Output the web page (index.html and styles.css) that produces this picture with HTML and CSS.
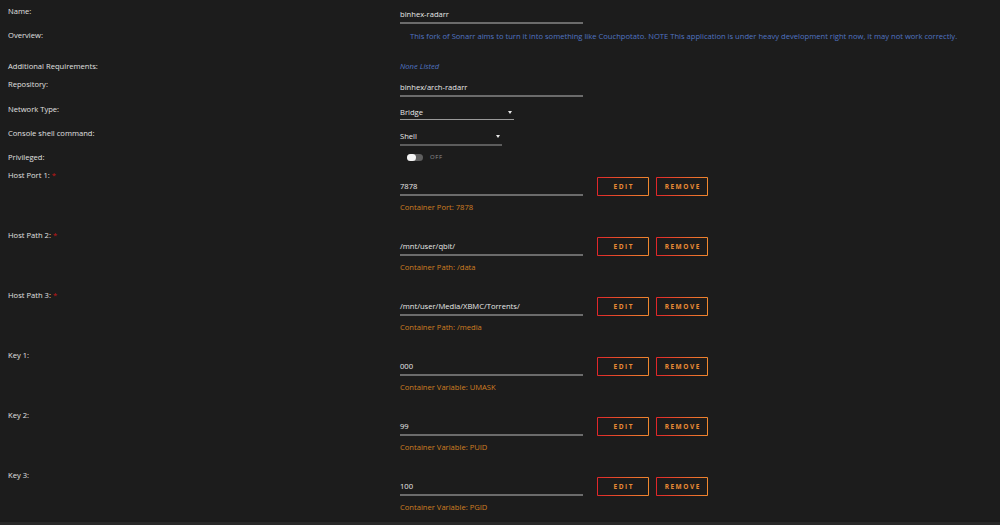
FILE: index.html
```html
<!DOCTYPE html>
<html>
<head>
<meta charset="utf-8">
<link rel="stylesheet" href="styles.css">
</head>
<body>
<main class="panel">
  <div class="row r-name">
    <div class="label">Name:</div>
    <div class="value v3"><div class="input w-full">binhex-radarr</div></div>
  </div>
  <div class="row r-overview">
    <div class="label">Overview:</div>
    <div class="value v1"><p class="overview">This fork of Sonarr aims to turn it into something like Couchpotato. NOTE This application is under heavy development right now, it may not work correctly.</p></div>
  </div>
  <div class="row r-req">
    <div class="label">Additional Requirements:</div>
    <div class="value"><span class="none">None Listed</span></div>
  </div>
  <div class="row r-repo">
    <div class="label">Repository:</div>
    <div class="value v3"><div class="input w-full">binhex/arch-radarr</div></div>
  </div>
  <div class="row r-net">
    <div class="label">Network Type:</div>
    <div class="value v3"><div class="select sel-bridge">Bridge<span class="caret"></span></div></div>
  </div>
  <div class="row r-shell">
    <div class="label">Console shell command:</div>
    <div class="value v3"><div class="select sel-shell">Shell<span class="caret"></span></div></div>
  </div>
  <div class="row r-priv">
    <div class="label">Privileged:</div>
    <div class="value"><div class="switch"><span class="track"><span class="knob"></span></span><span class="off">OFF</span></div></div>
  </div>

  <div class="row r-cfg">
    <div class="label">Host Port 1: <span class="req">*</span></div>
    <div class="value v8">
      <div class="cfg-line"><div class="input w-full">7878</div><button class="btn">EDIT</button><button class="btn">REMOVE</button></div>
      <div class="hint">Container Port: 7878</div>
    </div>
  </div>
  <div class="row r-cfg">
    <div class="label">Host Path 2: <span class="req">*</span></div>
    <div class="value v8">
      <div class="cfg-line"><div class="input w-full">/mnt/user/qbit/</div><button class="btn">EDIT</button><button class="btn">REMOVE</button></div>
      <div class="hint">Container Path: /data</div>
    </div>
  </div>
  <div class="row r-cfg">
    <div class="label">Host Path 3: <span class="req">*</span></div>
    <div class="value v8">
      <div class="cfg-line"><div class="input w-full">/mnt/user/Media/XBMC/Torrents/</div><button class="btn">EDIT</button><button class="btn">REMOVE</button></div>
      <div class="hint">Container Path: /media</div>
    </div>
  </div>
  <div class="row r-cfg">
    <div class="label">Key 1:</div>
    <div class="value v8">
      <div class="cfg-line"><div class="input w-full">000</div><button class="btn">EDIT</button><button class="btn">REMOVE</button></div>
      <div class="hint">Container Variable: UMASK</div>
    </div>
  </div>
  <div class="row r-cfg">
    <div class="label">Key 2:</div>
    <div class="value v8">
      <div class="cfg-line"><div class="input w-full">99</div><button class="btn">EDIT</button><button class="btn">REMOVE</button></div>
      <div class="hint">Container Variable: PUID</div>
    </div>
  </div>
  <div class="row r-cfg r-last">
    <div class="label">Key 3:</div>
    <div class="value v8">
      <div class="cfg-line"><div class="input w-full">100</div><button class="btn">EDIT</button><button class="btn">REMOVE</button></div>
      <div class="hint">Container Variable: PGID</div>
    </div>
  </div>
</main>
</body>
</html>
```

FILE: styles.css
```css
* { box-sizing: border-box; }
html, body { margin: 0; padding: 0; }
body {
  background: #282828;
  font-family: "Open Sans", "DejaVu Sans", sans-serif;
  font-size: 7.6px;
  color: #dcdcdc;
  height: 525px;
  overflow: hidden;
}
.panel {
  background: #1c1c1c;
  padding: 5px 0 0 8px;
}
.row {
  display: grid;
  grid-template-columns: 392px 1fr;
  align-items: start;
}
.label {
  line-height: 12px;
  color: #e0e0e0;
}
.req { color: #c41616; }
.value { line-height: 12px; }
.v1 { margin-top: 1px; }
.v3 { margin-top: 3px; }
.v8 { margin-top: 8px; }

.r-name { height: 24px; }
.r-overview { height: 31px; }
.r-req { height: 18px; }
.r-repo { height: 25px; }
.r-net { height: 24px; }
.r-shell { height: 24px; }
.r-priv { height: 18px; }
.r-cfg { height: 60px; }
.r-last { height: 53px; }

.input {
  width: 183px;
  padding: 0 0 2px 0;
  border-bottom: 2px solid #6b6b6b;
  color: #e8e8e8;
  line-height: 12px;
}
.cfg-line .input { padding-top: 3px; }
.overview {
  margin: 0 0 0 10px;
  color: #5174c2;
  white-space: nowrap;
}
.none {
  color: #5174c2;
  font-style: italic;
}
.select {
  position: relative;
  color: #e8e8e8;
  line-height: 12px;
}
.sel-bridge {
  width: 114px;
  padding-bottom: 1px;
  border-bottom: 1px solid #9a9a9a;
}
.sel-shell {
  width: 102px;
  padding-bottom: 2px;
  border-bottom: 2px solid #5c5c5c;
}
.caret {
  position: absolute;
  right: 2px;
  top: 5px;
  width: 0;
  height: 0;
  border-left: 2px solid transparent;
  border-right: 2px solid transparent;
  border-top: 3px solid #e8e8e8;
}
.switch {
  display: flex;
  align-items: center;
  gap: 7px;
  padding-left: 7px;
  height: 12px;
}
.track {
  display: block;
  width: 16px;
  height: 7px;
  border-radius: 4px;
  background: #5e5e5e;
  position: relative;
}
.knob {
  position: absolute;
  left: 0;
  top: 0;
  width: 9px;
  height: 7px;
  border-radius: 3.5px;
  background: #f4f4f4;
}
.off {
  font-size: 6px;
  letter-spacing: 0.6px;
  color: #8d8d8d;
}
.cfg-line {
  display: flex;
  align-items: flex-end;
}
.btn {
  width: 52px;
  height: 19px;
  margin-left: 7px;
  padding: 0;
  border: 1px solid transparent;
  border-radius: 1px;
  background:
    linear-gradient(#1c1c1c, #1c1c1c) padding-box,
    linear-gradient(90deg, #e0262a, #f0882f) border-box;
  color: #e88a34;
  font-family: "Open Sans", "DejaVu Sans", sans-serif;
  font-weight: 700;
  font-size: 6.5px;
  letter-spacing: 1.5px;
  text-indent: 1.5px;
  line-height: 17px;
}
.cfg-line .btn:first-of-type { margin-left: 14px; }
.hint {
  margin-top: 5px;
  color: #cf7e22;
  line-height: 12px;
}
```
